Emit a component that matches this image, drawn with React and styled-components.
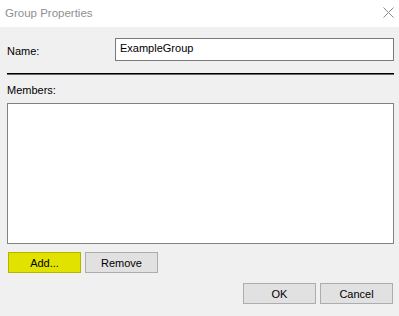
import React from 'react';
import styled, { createGlobalStyle } from 'styled-components';

const GlobalStyle = createGlobalStyle`
  html, body {
    margin: 0;
    padding: 0;
    background: #f0f0f0;
  }
  body {
    font-family: "Liberation Sans", Arial, sans-serif;
    font-size: 11px;
    color: #000;
  }
`;

const Window = styled.div`
  width: 399px;
  height: 316px;
  background: #f0f0f0;
  display: flex;
  flex-direction: column;
  overflow: hidden;
`;

const TitleBar = styled.div`
  height: 27px;
  background: #fff;
  display: flex;
  align-items: center;
  justify-content: space-between;
  padding: 0 5px 2px 5px;
  box-sizing: border-box;
`;

const Title = styled.span`
  font-size: 11.5px;
  color: #8f8f8f;
`;

const CloseBtn = styled.div`
  width: 11px;
  height: 11px;
  display: flex;
`;

const Body = styled.div`
  flex: 1;
  display: flex;
  flex-direction: column;
  padding: 11px 5px 0 7px;
`;

const NameRow = styled.div`
  display: flex;
  align-items: center;
  height: 23px;
`;

const Label = styled.label`
  width: 108px;
  padding-top: ${({ offset }) => offset || 0}px;
`;

const TextBox = styled.div`
  flex: 1;
  height: 23px;
  box-sizing: border-box;
  background: #fff;
  border: 1px solid #7a7a7a;
  padding: 3px 0 0 4px;
`;

const Separator = styled.div`
  height: 1px;
  background: #000;
  border-bottom: 1px solid #666;
  margin: 12px 0 9px 0;
`;

const ListBox = styled.div`
  height: 141px;
  box-sizing: border-box;
  background: #fff;
  border: 1px solid #828282;
  margin-top: 7px;
`;

const ButtonRow = styled.div`
  display: flex;
  gap: 4px;
  margin-top: ${({ top }) => top}px;
  justify-content: ${({ right }) => (right ? 'flex-end' : 'flex-start')};
  padding-left: ${({ indent }) => indent || 0}px;
  padding-right: ${({ rightPad }) => rightPad || 0}px;
`;

const Button = styled.button`
  width: 73px;
  height: 21px;
  box-sizing: border-box;
  font-family: "Liberation Sans", Arial, sans-serif;
  font-size: 11px;
  color: #000;
  border: 1px solid ${({ highlight }) => (highlight ? '#b5b500' : '#adadad')};
  background: ${({ highlight }) => (highlight ? '#e2e200' : '#e1e1e1')};
  padding: 0;
`;

export default function App() {
  return (
    <>
      <GlobalStyle />
      <Window>
        <TitleBar>
          <Title>Group Properties</Title>
          <CloseBtn>
            <svg width="11" height="11" viewBox="0 0 11 11">
              <path d="M0.5 0.5 L10.5 10.5 M10.5 0.5 L0.5 10.5" stroke="#8a8a8a" strokeWidth="1" />
            </svg>
          </CloseBtn>
        </TitleBar>
        <Body>
          <NameRow>
            <Label offset={2}>Name:</Label>
            <TextBox>ExampleGroup</TextBox>
          </NameRow>
          <Separator />
          <Label>Members:</Label>
          <ListBox />
          <ButtonRow top={8} indent={1}>
            <Button highlight>Add...</Button>
            <Button>Remove</Button>
          </ButtonRow>
          <ButtonRow top={10} right rightPad={1}>
            <Button>OK</Button>
            <Button>Cancel</Button>
          </ButtonRow>
        </Body>
      </Window>
    </>
  );
}
